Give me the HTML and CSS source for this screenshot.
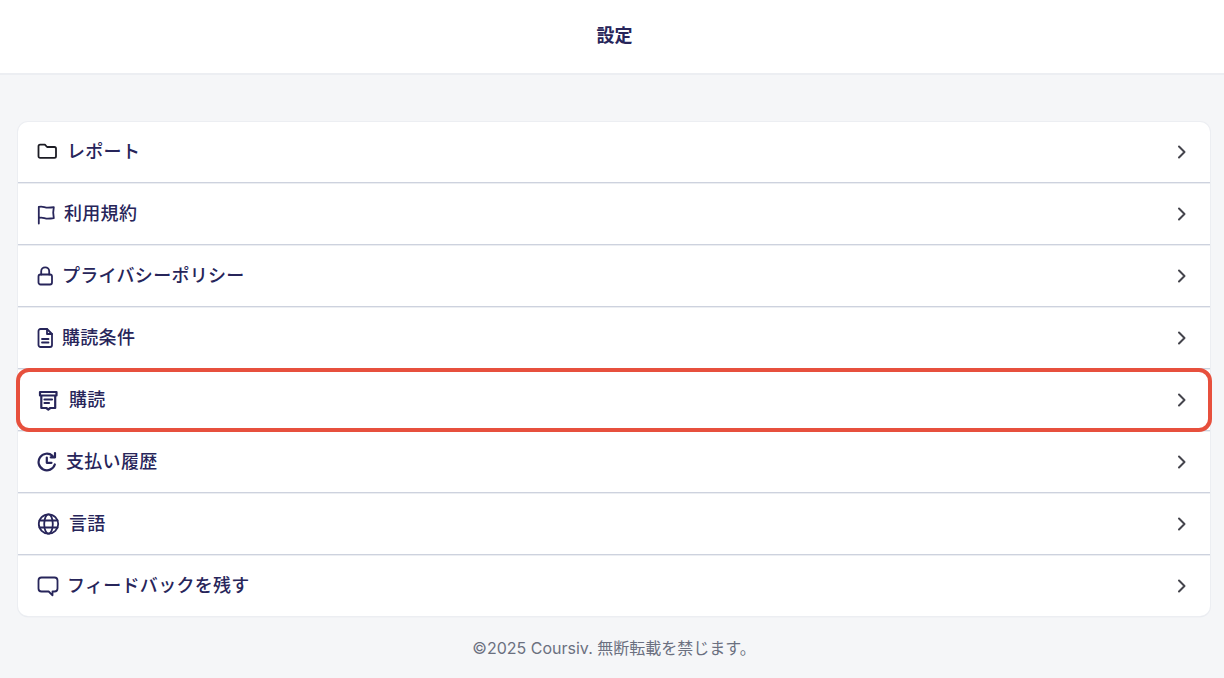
FILE: index.html
```html
<!DOCTYPE html>
<html lang="ja">
<head>
<meta charset="utf-8">
<title>設定</title>
<link rel="stylesheet" href="styles.css">
</head>
<body>
<header class="top"><h1 class="title">設定</h1></header>
<main class="content">
  <ul class="card">
    <li class="row">
      <svg class="ico" width="22" height="24" viewBox="0 0 22 24"><path class="dark" d="M1.500 6.200c0-.9.7-1.600 1.600-1.600h4.800l2.200 2.400h7.300c.9 0 1.600.7 1.600 1.600v7.700c0 .9-.7 1.600-1.600 1.600H3.100c-.9 0-1.600-.7-1.600-1.600z"/></svg>
      <span class="label">レポート</span>
      <svg class="chev" width="24" height="24" viewBox="0 0 24 24"><path d="M9 6.500l5.500 5.500L9 17.500"/></svg>
    </li>
    <li class="row">
      <svg class="ico" width="19" height="24" viewBox="0 0 19 24"><path d="M1.800 21.500V4.900c4-1.200 5.500.8 9 .8s6-.5 6-.5l-.6 5.500.6 5.500s-3 .5-6 .5c-3.500 0-5-2-9-.8"/></svg>
      <span class="label">利用規約</span>
      <svg class="chev" width="24" height="24" viewBox="0 0 24 24"><path d="M9 6.500l5.500 5.500L9 17.500"/></svg>
    </li>
    <li class="row">
      <svg class="ico" width="17" height="24" viewBox="0 0 17 24"><rect x="1.500" y="10.500" width="13.500" height="10" rx="2"/><path d="M4.200 10.500V7.300a4 4 0 0 1 8 0v3.200"/></svg>
      <span class="label">プライバシーポリシー</span>
      <svg class="chev" width="24" height="24" viewBox="0 0 24 24"><path d="M9 6.500l5.500 5.500L9 17.500"/></svg>
    </li>
    <li class="row">
      <svg class="ico" width="17" height="24" viewBox="0 0 17 24"><path d="M1.500 5c0-1.100.9-2 2-2h6.500l5 5v11c0 1.100-.9 2-2 2H3.500c-1.100 0-2-.9-2-2z"/><path d="M10 3v5h5M5 13h6.500M5 16.500h6.500"/></svg>
      <span class="label">購読条件</span>
      <svg class="chev" width="24" height="24" viewBox="0 0 24 24"><path d="M9 6.500l5.500 5.500L9 17.500"/></svg>
    </li>
    <li class="row">
      <svg class="ico" width="24" height="24" viewBox="0 0 24 24"><path class="thick" d="M3 4h16.500v3.500H3zM4.300 7.500V20h5l2 1.500 2-1.500h4.900V7.500M7.500 11.500h7.500M7.500 15h4.500"/></svg>
      <span class="label">購読</span>
      <svg class="chev" width="24" height="24" viewBox="0 0 24 24"><path d="M9 6.500l5.500 5.500L9 17.500"/></svg>
      <span class="mark"></span>
    </li>
    <li class="row">
      <svg class="ico" width="21" height="24" viewBox="0 0 21 24"><path class="thick" d="M17.800 14.500A8.300 8.300 0 1 1 15.500 5.900M18 3v4.300h-4.300M9.800 7.500v5.300h4.700"/></svg>
      <span class="label">支払い履歴</span>
      <svg class="chev" width="24" height="24" viewBox="0 0 24 24"><path d="M9 6.500l5.500 5.500L9 17.500"/></svg>
    </li>
    <li class="row">
      <svg class="ico" width="24" height="24" viewBox="0 0 24 24"><circle cx="11.500" cy="12" r="9.700"/><ellipse cx="11.500" cy="12" rx="4.300" ry="9.700"/><path d="M2.500 8.500h18M2.500 15.500h18"/></svg>
      <span class="label">言語</span>
      <svg class="chev" width="24" height="24" viewBox="0 0 24 24"><path d="M9 6.500l5.500 5.500L9 17.500"/></svg>
    </li>
    <li class="row">
      <svg class="ico" width="22" height="24" viewBox="0 0 22 24"><path d="M4.500 3.500h13c1.700 0 3 1.300 3 3v8c0 1.700-1.300 3-3 3h-2v3.800l-3.800-3.800H4.500c-1.700 0-3-1.300-3-3v-8c0-1.700 1.300-3 3-3z"/></svg>
      <span class="label">フィードバックを残す</span>
      <svg class="chev" width="24" height="24" viewBox="0 0 24 24"><path d="M9 6.500l5.500 5.500L9 17.500"/></svg>
    </li>
  </ul>
  <p class="foot">©2025 Coursiv. 無断転載を禁じます。</p>
</main>
</body>
</html>
```
FILE: styles.css
```css
* { box-sizing: border-box; }
html, body { margin: 0; height: 100%; }
body {
  background: #f5f6f8;
  color: #27255a;
  font-family: Inter, "Noto Sans CJK JP", sans-serif;
  overflow: hidden;
}
.top {
  height: 75px;
  padding: 0 0 2px 5px;
  background: #fff;
  border-bottom: 2px solid #eceef2;
  display: flex;
  align-items: center;
  justify-content: center;
}
.title { margin: 0; font-size: 18px; font-weight: 600; line-height: 24px; }
.content { padding: 47px 14px 0 18px; }
.card {
  list-style: none;
  margin: 0;
  padding: 0;
  background: #fff;
  border-radius: 10px;
  box-shadow: 0 0 0 1px #eceef2, 0 1px 1px #cdd3df;
}
.row {
  position: relative;
  height: 62px;
  padding: 0 16px 0 19px;
  display: flex;
  align-items: center;
  gap: 8px;
  border-bottom: 1px solid #cdd2de;
  box-shadow: 0 1px 0 #eceef2;
}
.row:first-child { height: 61px; }
.row:last-child { border-bottom: 0; height: 61px; box-shadow: none; }
.ico { flex: none; fill: none; stroke: #27255a; stroke-width: 1.800; stroke-linecap: round; stroke-linejoin: round; }
.dark { stroke: #1c1c24; }
.thick { stroke-width: 2.200; }
.label { flex: 1; font-size: 18px; font-weight: 500; line-height: 24px; letter-spacing: 0.3px; }
.chev { flex: none; fill: none; stroke: #44444c; stroke-width: 2; stroke-linecap: round; stroke-linejoin: round; }
.mark {
  position: absolute;
  left: -2px;
  right: -2px;
  top: -1px;
  bottom: -2px;
  border: 4px solid #e7503d;
  border-radius: 13px;
}
.foot {
  margin: 22px 0 0;
  text-align: center;
  font-size: 16px;
  line-height: 20px;
  color: #6b7080;
}
```
